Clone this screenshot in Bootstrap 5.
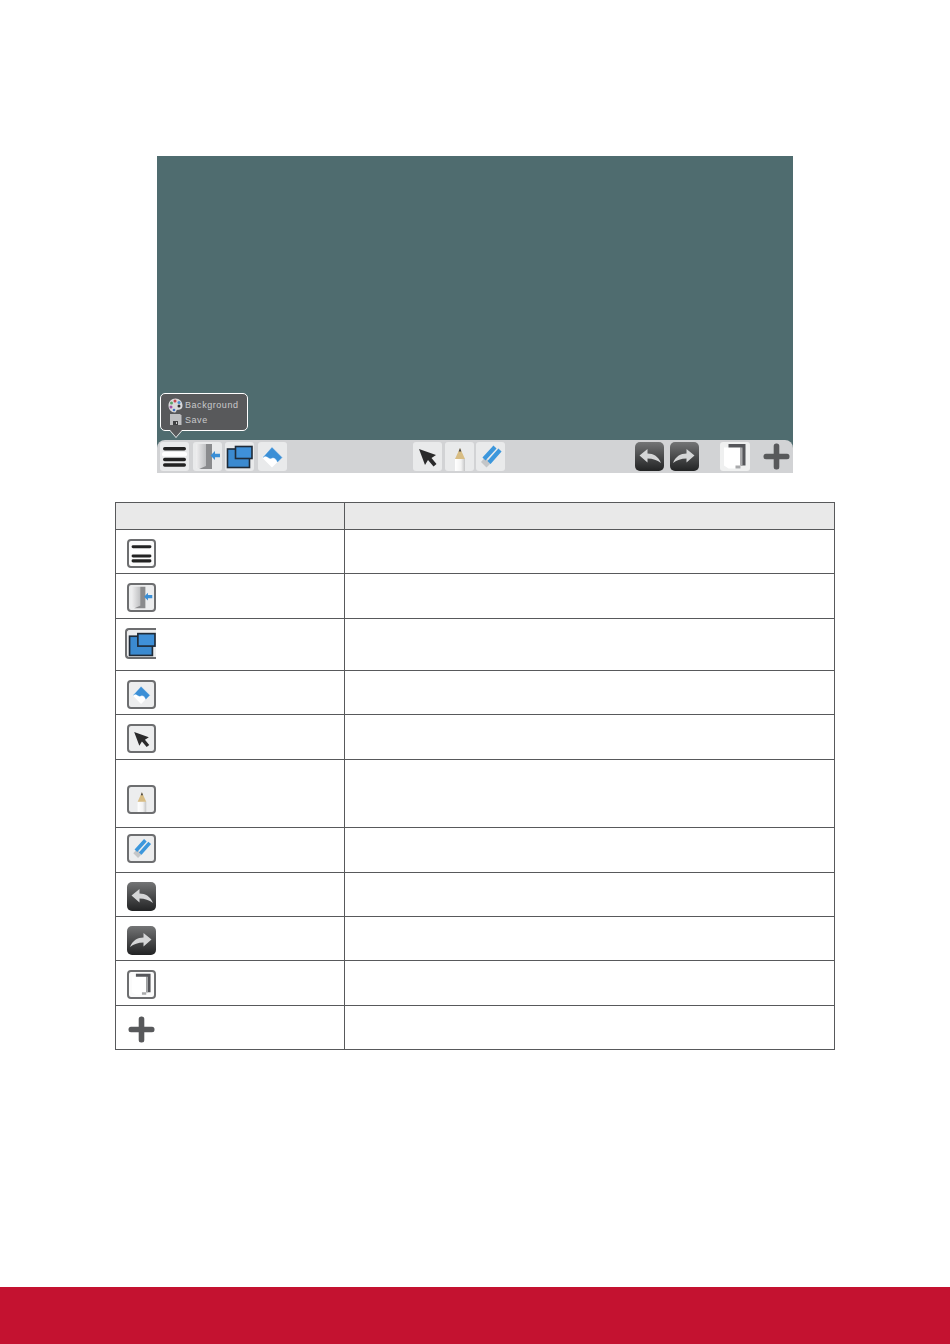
<!DOCTYPE html>
<html lang="en">
<head>
<meta charset="utf-8">
<title>Toolbar</title>
<link href="https://cdn.jsdelivr.net/npm/bootstrap@5.3.0/dist/css/bootstrap.min.css" rel="stylesheet">
<style>
html,body{height:100%;margin:0}
body{background:#fff;font-family:"Liberation Sans",Arial,sans-serif;min-height:1344px}
.pg{min-height:1344px;padding-top:156px}
.board{width:636px;height:317px;margin-left:157px;background:#4f6c6f;position:relative}
.tbar{height:33px;background:#d2d3d5;border-radius:8px 8px 0 0;padding:2px 3px 2px 3px}
.tile{width:29px;height:29px;background:#e9eaeb;border-radius:3px;display:block;flex:none}
.tile svg,.cellico svg{display:block;width:100%;height:100%}
.plain{background:none}
.g1{gap:3.6px}
.g2{gap:2.8px;margin-left:126px}
.g3{gap:6px;margin-left:129.500px}
.pgb{margin-left:21px;width:30px;background:#eff0f0}
.plusb{margin-left:12.500px;width:29px;background:none}
.tip{position:absolute;left:3px;top:237px;width:88px;height:38px;background:#58595b;border:1px solid #fff;border-radius:5px;color:#c9cacc;font-size:9px;letter-spacing:.55px;padding:4px 0 0 7px;line-height:14.5px}
.tip:before,.tip:after{content:"";position:absolute;left:9px;border-style:solid;border-color:transparent;border-width:7px 6px 0}
.tip:before{bottom:-8px;border-top-color:#fff}
.tip:after{bottom:-6.500px;border-top-color:#58595b}
.tiprow{display:flex;align-items:center;gap:2px;height:14.5px}
.tiprow svg{width:15px;height:15px;flex:none}
.tbl{width:720px;margin:29px 0 0 115px;table-layout:fixed;--bs-table-border-color:#58595b;border-color:#58595b}
.tbl>*>tr>*{padding:3px 0 0 11px;border:1px solid #58595b;vertical-align:middle}
.tbl thead th{background:#e9e9e9;--bs-table-bg:#e9e9e9;height:27px;padding:0}
.c1{width:229px}
.cellico{display:block;width:29px;height:29px;border:2px solid #6d6e70;border-radius:4px;background:#ecedee}
.cellico.white{background:#fbfbfb}
.cellico.none{border:0;background:none}
.cellico.big{width:31px;height:31px;margin-left:-2px;border-right:0;border-radius:4px 0 0 4px}
.tbl>*>tr>td.nop{padding-top:0;padding-bottom:3px}
.r44{height:44px}.r45{height:45px}.r52{height:52px}.r68{height:68px}
.tbl>*>tr>td.bot{vertical-align:bottom;padding-bottom:13px;padding-top:0}
.foot{position:absolute;left:0;right:0;top:1287px;height:57px;background:#c41230}
</style>
</head>
<body>
<svg width="0" height="0" class="position-absolute">
<defs>
<linearGradient id="dk" x1="0" y1="0" x2="0" y2="1"><stop offset="0" stop-color="#747576"/><stop offset=".5" stop-color="#4a4b4c"/><stop offset="1" stop-color="#222324"/></linearGradient>
<linearGradient id="pc" x1="0" y1="0" x2="1" y2="0"><stop offset="0" stop-color="#fff"/><stop offset=".6" stop-color="#f3f3f3"/><stop offset="1" stop-color="#c4c5c6"/></linearGradient>
<linearGradient id="dr" x1="0" y1="0" x2="1" y2="0"><stop offset="0" stop-color="#efeff0"/><stop offset="1" stop-color="#bfc0c2"/></linearGradient>
<symbol id="i-menu" viewBox="0 0 29 29"><rect x="3" y="5" width="23" height="3.500" rx="1.700" fill="#222"/><rect x="2" y="10" width="25" height="4.500" rx="2" fill="#fff"/><rect x="3" y="15.700" width="23" height="3.500" rx="1.700" fill="#222"/><rect x="3" y="21.300" width="23" height="3.500" rx="1.700" fill="#222"/></symbol>
<symbol id="i-door" viewBox="0 0 29 29"><path d="M3 2h10v24H3z" fill="url(#dr)"/><path d="M13 2h6v25H6l7-3z" fill="#8a8b8d"/><path d="M27 11.700v3.600h-5v2.700l-4.500-4.500 4.500-4.500v2.700z" fill="#3b8fd6"/></symbol>
<symbol id="i-win" viewBox="0 0 29 29"><rect x="2.500" y="7" width="22" height="18.500" fill="#3b8ad0" stroke="#1f2b38" stroke-width="1.600"/><rect x="10.500" y="4.500" width="16.500" height="12" fill="#3f90d8" stroke="#1f2b38" stroke-width="1.600"/></symbol>
<symbol id="i-win2" viewBox="1 1 26 26"><rect x="2.500" y="7" width="22" height="18.500" fill="#3b8ad0" stroke="#1f2b38" stroke-width="1.600"/><rect x="10.500" y="4.500" width="16.500" height="12" fill="#3f90d8" stroke="#1f2b38" stroke-width="1.600"/></symbol>
<symbol id="i-fill" viewBox="0 0 29 29"><path d="M14 5.500 24 15.500 14 25.500 4 15.500z" fill="#fff"/><path d="M14 5.500 24 15.500 19.500 20c-1-3-3.500-5-5.500-4s-3 0-4.500-1-2.500-1.500-4.500.500z" fill="#3b8fd6" stroke="#3b8fd6" stroke-width=".4"/></symbol>
<symbol id="i-arrow" viewBox="0 0 29 29"><path d="M6 7 23 13 18.500 16 23.500 22 20.500 24.500 15 18 12 23z" fill="#2a2a2b"/></symbol>
<symbol id="i-pen" viewBox="0 0 29 29"><path d="M10 17h10v12H10z" fill="url(#pc)"/><path d="M15 6 20 17H10z" fill="#d8bd84"/><path d="M15 6 16.300 9.500h-2.600z" fill="#444"/></symbol>
<symbol id="i-eraser" viewBox="0 0 29 29"><path d="M5 20 9 15.500 15 21 10.500 25.500z" fill="#c4c6c8"/><path d="M8 17 19 5M13 20.500 24 8" stroke="#3c97dc" stroke-width="4.200" fill="none"/></symbol>
<symbol id="i-undo" viewBox="0 0 29 29"><rect width="29" height="29" rx="5" fill="url(#dk)"/><path d="M4.500 13.500 12.500 7v4.500c6 0 11 3 13.500 9.500-4-3-8-4.500-13.500-4.500V20.500z" fill="#d5d6d7"/></symbol>
<symbol id="i-redo" viewBox="0 0 29 29"><rect width="29" height="29" rx="5" fill="url(#dk)"/><path d="M24.500 13.500 16.500 7v4.500c-6 0-11 3-13.500 9.500 4-3 8-4.500 13.500-4.500V20.500z" fill="#d5d6d7"/></symbol>
<symbol id="i-page" viewBox="0 0 29 29"><rect x="8" y="2" width="17" height="21.500" fill="#55565a"/><path d="M3.500 5.500h16.500v21H8l-4.500-3z" fill="#fff"/><path d="M20 5.500h2v18h-7v3h5z" fill="#a9aaac"/></symbol>
<symbol id="i-plus" viewBox="0 0 29 29"><rect x="11.700" y="1.500" width="5.600" height="26" rx="2.500" fill="#58595b"/><rect x="1.500" y="11.700" width="26" height="5.600" rx="2.500" fill="#58595b"/></symbol>
<symbol id="i-palette" viewBox="0 0 15 15"><path d="M7.500.5C3.500.5.500 3.500.500 7.500s3 7 6 7c2 0 1.500-2 2.500-2.500 2-.5 5.500 0 5.500-4.500C14.500 3.500 11.500.5 7.500.5z" fill="#d9d9da"/><circle cx="3.500" cy="5" r="1.500" fill="#5aa469"/><circle cx="7" cy="3" r="1.500" fill="#c9474f"/><circle cx="11" cy="4.500" r="1.500" fill="#4f8fd0"/><circle cx="3" cy="9" r="1.500" fill="#a552a6"/><circle cx="6" cy="12" r="1.300" fill="#3f6fc0"/><circle cx="11" cy="8" r="1.500" fill="#333"/></symbol>
<symbol id="i-save" viewBox="0 0 15 15"><path d="M2 2h10l1.500 1.500V13H2z" fill="#bfc0c2"/><rect x="5" y="9" width="5" height="4" fill="#3f4042"/><rect x="8" y="10" width="1" height="2" fill="#ccc"/></symbol>
</defs>
</svg>
<div class="pg">
  <div class="board d-flex flex-column justify-content-end">
    <div class="tip">
      <div class="tiprow"><svg><use href="#i-palette"/></svg><span>Background</span></div>
      <div class="tiprow"><svg><use href="#i-save"/></svg><span>Save</span></div>
    </div>
    <div class="tbar d-flex align-items-start">
      <div class="d-flex g1">
        <span class="tile"><svg><use href="#i-menu"/></svg></span>
        <span class="tile"><svg><use href="#i-door"/></svg></span>
        <span class="tile"><svg><use href="#i-win"/></svg></span>
        <span class="tile"><svg><use href="#i-fill"/></svg></span>
      </div>
      <div class="d-flex g2">
        <span class="tile"><svg><use href="#i-arrow"/></svg></span>
        <span class="tile"><svg><use href="#i-pen"/></svg></span>
        <span class="tile"><svg><use href="#i-eraser"/></svg></span>
      </div>
      <div class="d-flex g3">
        <span class="tile plain"><svg><use href="#i-undo"/></svg></span>
        <span class="tile plain"><svg><use href="#i-redo"/></svg></span>
      </div>
      <span class="tile pgb"><svg><use href="#i-page"/></svg></span>
      <span class="tile plusb"><svg><use href="#i-plus"/></svg></span>
    </div>
  </div>
  <table class="table table-bordered tbl mb-0">
    <thead><tr><th class="c1"></th><th></th></tr></thead>
    <tbody>
      <tr class="r44"><td><span class="cellico white"><svg><use href="#i-menu"/></svg></span></td><td></td></tr>
      <tr class="r45"><td><span class="cellico"><svg><use href="#i-door"/></svg></span></td><td></td></tr>
      <tr class="r52"><td class="nop"><span class="cellico big"><svg><use href="#i-win2"/></svg></span></td><td></td></tr>
      <tr class="r44"><td><span class="cellico"><svg><use href="#i-fill"/></svg></span></td><td></td></tr>
      <tr class="r45"><td><span class="cellico"><svg><use href="#i-arrow"/></svg></span></td><td></td></tr>
      <tr class="r68"><td class="bot"><span class="cellico"><svg><use href="#i-pen"/></svg></span></td><td></td></tr>
      <tr class="r45"><td class="nop"><span class="cellico"><svg><use href="#i-eraser"/></svg></span></td><td></td></tr>
      <tr class="r44"><td><span class="cellico none"><svg><use href="#i-undo"/></svg></span></td><td></td></tr>
      <tr class="r44"><td><span class="cellico none"><svg><use href="#i-redo"/></svg></span></td><td></td></tr>
      <tr class="r45"><td><span class="cellico white"><svg><use href="#i-page"/></svg></span></td><td></td></tr>
      <tr class="r44"><td><span class="cellico none"><svg><use href="#i-plus"/></svg></span></td><td></td></tr>
    </tbody>
  </table>
</div>
<div class="foot"></div>
<script src="https://cdn.jsdelivr.net/npm/bootstrap@5.3.0/dist/js/bootstrap.bundle.min.js"></script>
</body>
</html>
